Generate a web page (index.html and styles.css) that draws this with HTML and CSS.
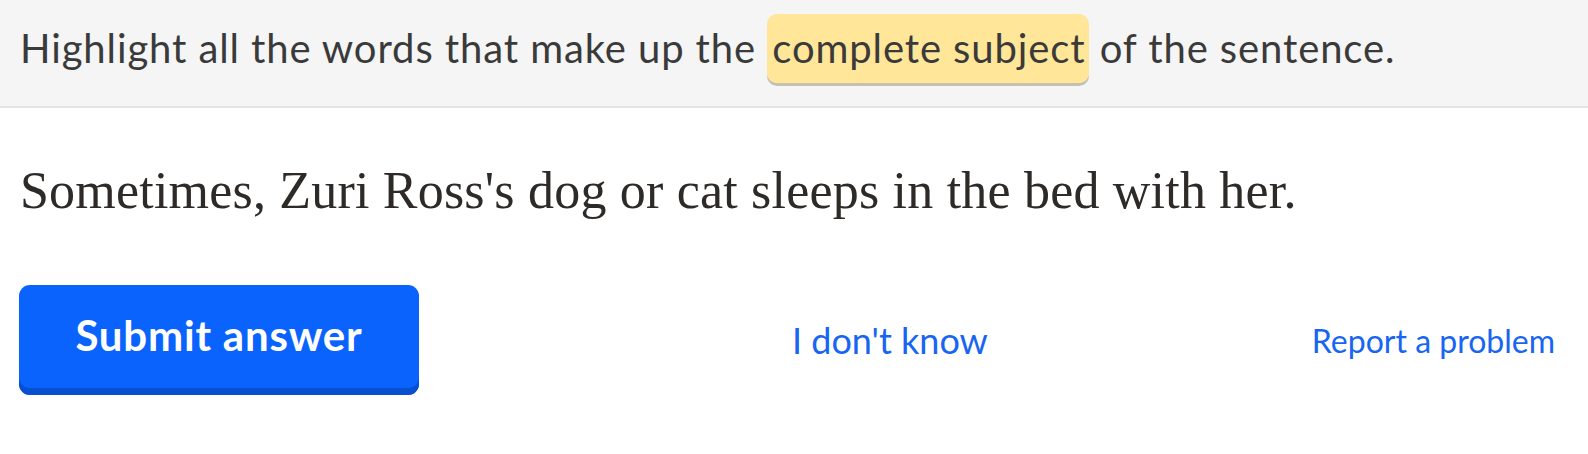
FILE: index.html
```html
<!DOCTYPE html>
<html>
<head>
<meta charset="utf-8">
<link rel="stylesheet" href="styles.css">
</head>
<body>
<div class="prompt">
  <p class="prompt-text">Highlight all the words that make up the <span class="hl">complete subject</span> of the sentence.</p>
</div>
<div class="content">
  <p class="sentence">Sometimes, Zuri Ross's dog or cat sleeps in the bed with her.</p>
  <div class="actions">
    <button class="submit">Submit answer</button>
    <a class="link idk">I don't know</a>
    <a class="link report">Report a problem</a>
  </div>
</div>
</body>
</html>
```
FILE: styles.css
```css
html, body {
  margin: 0;
  padding: 0;
  background: #ffffff;
}
body {
  font-family: Lato, "Noto Sans", sans-serif;
  color: #333333;
}
.prompt {
  background: #f5f5f5;
  border-bottom: 2px solid #e4e4e4;
  height: 108px;
  box-sizing: border-box;
  padding: 24px 0 0 20px;
}
.prompt-text {
  margin: 0;
  font-size: 40px;
  line-height: 48px;
  color: #3a3a3a;
  letter-spacing: 0.9px;
}
.hl {
  background: #ffe699;
  border-radius: 10px;
  padding: 10px 3px 11px 5px;
  box-shadow: 0 3px 0 #c4c0b2;
}
.content {
  padding: 0 20px;
}
.sentence {
  margin: 0;
  padding-top: 53px;
  font-family: "Liberation Serif", Georgia, serif;
  font-size: 52px;
  letter-spacing: 0.2px;
  color: #2d2a28;
  line-height: 60px;
}
.actions {
  display: flex;
  align-items: center;
  margin-top: 64px;
}
.submit {
  width: 400px;
  height: 110px;
  margin-left: -1px;
  background: #0b63fe;
  color: #ffffff;
  border: none;
  border-radius: 11px;
  box-shadow: inset 0 -7px 0 #0650d1;
  font-family: Lato, sans-serif;
  font-weight: 700;
  font-size: 42px;
  letter-spacing: 0.8px;
  padding: 0 0 10px 0;
}
.link {
  color: #1865f2;
  font-family: Lato, sans-serif;
}
.idk {
  font-size: 36px;
  margin-left: 373px;
}
.report {
  font-size: 32px;
  margin-left: auto;
  margin-right: 13px;
}
```
